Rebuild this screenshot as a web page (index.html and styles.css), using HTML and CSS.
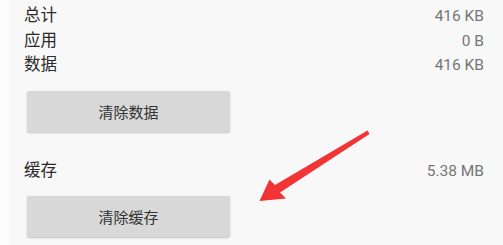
FILE: index.html
```html
<!DOCTYPE html>
<html lang="zh">
<head>
<meta charset="utf-8">
<link rel="stylesheet" href="styles.css">
</head>
<body>
<div class="page">
  <div class="rows">
    <div class="row"><span class="label">总计</span><span class="value">416 KB</span></div>
    <div class="row"><span class="label">应用</span><span class="value">0 B</span></div>
    <div class="row"><span class="label">数据</span><span class="value">416 KB</span></div>
  </div>
  <div class="btn btn-first">清除数据</div>
  <div class="row row-cache"><span class="label">缓存</span><span class="value">5.38 MB</span></div>
  <div class="btn">清除缓存</div>
  <svg class="arrow" width="503" height="245" viewBox="0 0 503 245">
    <polygon fill="#f23434" points="367.5,130.5 369.5,134 280,192.5 286,198.5 259.5,201 269.5,179.5 275,185"/>
  </svg>
</div>
</body>
</html>
```
FILE: styles.css
```css
html, body {
  margin: 0;
  padding: 0;
}
body {
  width: 503px;
  height: 245px;
  overflow: hidden;
  background: #f8f8f8;
  font-family: "Noto Sans CJK SC", "Noto Sans", sans-serif;
}
.page {
  position: relative;
  height: 245px;
  box-sizing: border-box;
  border-left: 9px solid #fdfdfd;
  padding: 2px 19px 0 15px;
}
.rows {
  display: flex;
  flex-direction: column;
}
.row {
  display: flex;
  justify-content: space-between;
  align-items: baseline;
  height: 24.5px;
  line-height: 24.5px;
}
.label {
  font-size: 16.5px;
  color: #2a2a2a;
}
.value {
  font-family: Roboto, "Liberation Sans", sans-serif;
  font-size: 15.5px;
  color: #767676;
}
.btn {
  width: 203px;
  height: 41px;
  margin-left: 3px;
  box-sizing: border-box;
  background: #d8d8d8;
  border-radius: 2px;
  box-shadow: 0 1px 2px rgba(0,0,0,0.22);
  display: flex;
  align-items: center;
  justify-content: center;
  font-size: 15px;
  color: #333;
}
.btn-first {
  margin-top: 15px;
}
.row-cache {
  margin-top: 25px;
  margin-bottom: 15px;
}
.arrow {
  position: absolute;
  left: -9px;
  top: 0;
}
```
